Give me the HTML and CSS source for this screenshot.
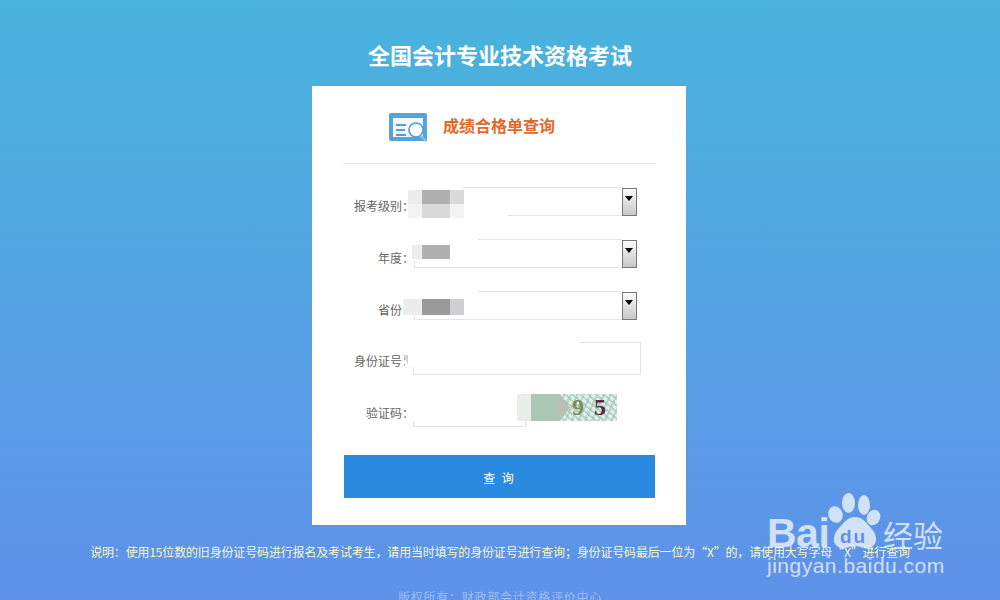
FILE: index.html
```html
<!DOCTYPE html>
<html lang="zh-CN">
<head>
  <meta charset="UTF-8" />
  <title>全国会计专业技术资格考试</title>
  <link rel="stylesheet" href="styles.css">
</head>
<body>
  <h1>全国会计专业技术资格考试</h1>

  <div class="card">
    <div class="card-head">
      <svg class="head-icon" width="40" height="30" viewBox="0 0 40 30">
        <rect width="38" height="28" rx="2" fill="#55a5da"/>
        <rect x="4" y="5" width="30" height="19" fill="#f4f9fc"/>
        <path d="M7 12h10M7 17h9M7 22h10" stroke="#4d9fd6" stroke-width="2.2" fill="none"/>
        <circle cx="27" cy="17" r="7" fill="#fff" stroke="#4d9fd6" stroke-width="1.6"/>
        <path d="M31.5 22.5l6 6" stroke="#8fc0e2" stroke-width="2"/>
      </svg>
      <span class="head-title">成绩合格单查询</span>
    </div>

    <div class="form">
      <div class="row row-select">
        <label>报考级别：</label>
        <div class="select">
          <div class="select-box"></div>
          <div class="select-arrow"></div>
          <div class="smear smear-1"></div>
          <div class="mosaic mosaic-1">
            <i class="c1"></i><i class="c4"></i><i class="c4"></i><i class="c2"></i>
            <i class="c0"></i><i class="c2"></i><i class="c2"></i><i class="c0"></i>
          </div>
        </div>
      </div>
      <div class="row row-select">
        <label>年度：</label>
        <div class="select">
          <div class="select-box"></div>
          <div class="select-arrow"></div>
          <div class="smear smear-2"></div>
          <div class="mosaic mosaic-2"><i class="c1"></i><i class="c4"></i><i class="c4"></i></div>
        </div>
      </div>
      <div class="row row-select row-last">
        <label>省份：</label>
        <div class="select">
          <div class="select-box"></div>
          <div class="select-arrow"></div>
          <div class="smear smear-2"></div>
          <div class="mosaic mosaic-3"><i class="c1 wide"></i><i class="c5"></i><i class="c5"></i><i class="c3"></i></div>
        </div>
      </div>
      <div class="row row-id">
        <label>身份证号：</label>
        <div class="field">
          <input class="text-input input-id" type="text">
          <div class="smear smear-id"></div>
          <div class="notch"></div>
        </div>
      </div>
      <div class="row row-code">
        <label>验证码：</label>
        <div class="field">
          <input class="text-input input-code" type="text">
          <div class="smear smear-code"></div>
        </div>
        <div class="captcha">
          <span class="captcha-mask"></span>
          <span class="captcha-nums"><b class="num-a">9</b><b class="num-b">5</b></span>
        </div>
      </div>
      <button class="submit">查 询</button>
    </div>
  </div>

  <p class="note">说明：使用15位数的旧身份证号码进行报名及考试考生，请用当时填写的身份证号进行查询；身份证号码最后一位为“X”的，请使用大写字母“X”进行查询</p>
  <p class="copy">版权所有：财政部会计资格评价中心</p>

  <div class="watermark">
    <span class="wm-bai">Bai</span>
    <svg class="wm-paw" width="60" height="62" viewBox="0 0 60 62">
      <g fill="#fff" fill-opacity="0.72">
        <ellipse cx="9.5" cy="24.5" rx="7" ry="8.5" transform="rotate(-20 9.5 24.5)"/>
        <ellipse cx="22.5" cy="13" rx="6.5" ry="10"/>
        <ellipse cx="38" cy="15" rx="6" ry="10"/>
        <ellipse cx="47.5" cy="27.5" rx="6.5" ry="8" transform="rotate(25 47.5 27.5)"/>
        <path d="M29 27c8 0 11 6 16 11 7 7 8 20-5 20-4 0-7-2-11-2s-7 2-11 2c-13 0-12-13-5-20 5-5 8-11 16-11z"/>
      </g>
    </svg>
    <span class="wm-du">du</span>
    <span class="wm-cn">经验</span>
    <span class="wm-url">jingyan.baidu.com</span>
  </div>
</body>
</html>
```

FILE: styles.css
```css
html, body {
  margin: 0;
  height: 600px;
  overflow: hidden;
}
body {
  font-family: "Noto Sans CJK SC", "Liberation Sans", sans-serif;
  background: linear-gradient(#49b4dd, #5f91e9);
  position: relative;
}
h1 {
  margin: 0;
  padding-top: 38px;
  height: 32px;
  line-height: 32px;
  font-size: 22px;
  font-weight: 700;
  color: #fff;
  text-align: center;
}
.card {
  box-sizing: border-box;
  width: 374px;
  height: 439px;
  margin: 16px 0 0 312px;
  padding: 0 30px 0 31px;
  background: #fff;
}
.card-head {
  box-sizing: border-box;
  height: 78px;
  padding: 27px 0 0 46px;
  display: flex;
  border-bottom: 1px solid #e6e6e6;
}
.head-icon {
  flex: none;
}
.head-title {
  margin-left: 14px;
  font-size: 16px;
  line-height: 24px;
  font-weight: 700;
  color: #e2682c;
}
.form {
  padding: 23px 0 0 1px;
}
.row {
  display: flex;
  margin-bottom: 23px;
}
.row label {
  width: 70px;
  flex: none;
  text-align: right;
  font-family: "Noto Sans CJK TC", sans-serif;
  font-size: 12px;
  color: #666;
}
.row-select {
  height: 29px;
}
.row-select label {
  line-height: 38px;
}
.row-last {
  margin-bottom: 22px;
}
.row-id {
  height: 33px;
  margin-bottom: 18px;
}
.row-id label {
  line-height: 38px;
}
.row-code {
  height: 34px;
  margin-bottom: 28px;
}
.row-code label {
  line-height: 40px;
}
.select {
  position: relative;
  display: flex;
  width: 223px;
  height: 29px;
}
.select-box {
  flex: 1;
  border: 1px solid #e4e4e4;
  border-right: 0;
}
.select-arrow {
  position: relative;
  box-sizing: border-box;
  width: 15px;
  height: 28px;
  margin-top: 1px;
  border: 1px solid #777;
  background: linear-gradient(#fafafa, #c8c8c8);
}
.select-arrow::after {
  content: "";
  position: absolute;
  left: 2px;
  top: 7px;
  border: 4px solid transparent;
  border-top: 5px solid #000;
  border-bottom: 0;
}
.field {
  position: relative;
}
.text-input {
  display: block;
  box-sizing: border-box;
  padding: 0;
  border: 1px solid #e4e4e4;
  background: #fff;
  outline: none;
}
.input-id {
  width: 228px;
  height: 33px;
  margin-left: -1px;
}
.input-code {
  width: 113px;
  height: 34px;
  margin-left: -1px;
}
/* white smudges left by the person who censored the screenshot */
.smear {
  position: absolute;
  background: #fff;
}
.smear-1 {
  left: -6px;
  top: -1px;
  width: 100px;
  height: 31px;
  clip-path: polygon(0 0, 55px 0, 55px 20px, 100px 20px, 100px 100%, 0 100%);
}
.smear-2 {
  left: -6px;
  top: -1px;
  width: 70px;
  height: 22px;
}
.smear-id {
  left: -9px;
  top: -1px;
  width: 174px;
  height: 26px;
}
.smear-code {
  left: -5px;
  top: -1px;
  width: 116px;
  height: 30px;
}
.notch {
  position: absolute;
  left: -11px;
  top: 13px;
  width: 5px;
  height: 10px;
  background: #d4d4d4;
  clip-path: polygon(100% 0, 100% 100%, 0 0);
}
.mosaic {
  position: absolute;
  display: flex;
  flex-wrap: wrap;
}
.mosaic i {
  display: block;
  width: 14px;
  height: 14px;
}
.mosaic i.wide {
  width: 19px;
}
.mosaic-1 {
  left: -6px;
  top: 3px;
  width: 56px;
}
.mosaic-2 {
  left: -2px;
  top: 6px;
  width: 38px;
}
.mosaic-2 i:first-child {
  width: 10px;
}
.mosaic-3 {
  left: -11px;
  top: 8px;
  width: 61px;
}
.mosaic-3 i {
  height: 16px;
}
.c0 { background: #f3f3f3; }
.c1 { background: #ececec; }
.c2 { background: #dadada; }
.c3 { background: #cfcfd3; }
.c4 { background: #b0b0b0; }
.c5 { background: #9a9a9a; }
.captcha {
  position: relative;
  flex: none;
  width: 100px;
  height: 27px;
  margin: 1px 0 0 -9px;
  background:
    repeating-linear-gradient(115deg, rgba(150, 195, 175, 0.55) 0 2px, transparent 2px 6px),
    repeating-linear-gradient(40deg, #b7d6c9 0 2px, #e2eee9 2px 5px);
}
.captcha-mask {
  position: absolute;
  left: 0;
  top: 0;
  width: 53px;
  height: 27px;
  background: linear-gradient(90deg, #e8eeea 0 14px, #abc6b7 14px 41px, #b9bfb2 41px);
  clip-path: polygon(0 0, 43px 0, 53px 50%, 43px 100%, 0 100%);
}
.captcha-nums {
  position: absolute;
  left: 55px;
  top: 0;
  font-family: "Liberation Serif", serif;
  font-size: 24px;
  line-height: 26px;
}
.num-a { color: #848b55; }
.num-b { margin-left: 10px; color: #5d2c3c; }
.submit {
  display: block;
  width: 311px;
  height: 43px;
  padding: 2px 0 0;
  border: none;
  background: #2a8ae0;
  color: #fff;
  font-family: inherit;
  font-size: 12px;
  letter-spacing: 2px;
}
.note {
  margin: 18px 0 0;
  line-height: 18px;
  font-family: "Noto Sans CJK TC", sans-serif;
  font-size: 12px;
  letter-spacing: -0.16px;
  color: #f6f6c6;
  text-align: center;
  white-space: nowrap;
}
.copy {
  margin: 27px 0 0;
  line-height: 18px;
  font-size: 12px;
  letter-spacing: 0.75px;
  color: #9dbdf0;
  text-align: center;
}
.watermark {
  position: absolute;
  left: 0;
  top: 0;
  width: 1000px;
  height: 600px;
  color: rgba(255, 255, 255, 0.72);
  pointer-events: none;
}
.watermark span {
  position: absolute;
  white-space: nowrap;
}
.wm-paw {
  position: absolute;
  left: 826px;
  top: 490px;
}
.wm-bai {
  left: 767px;
  top: 508px;
  font-family: "Liberation Sans", sans-serif;
  font-size: 41px;
  line-height: 50px;
  font-weight: 700;
  letter-spacing: -0.5px;
}
.watermark .wm-du {
  left: 840px;
  top: 524px;
  font-family: "Liberation Sans", sans-serif;
  font-size: 19px;
  line-height: 26px;
  font-weight: 700;
  letter-spacing: 2px;
  color: #5f92e8;
}
.wm-cn {
  left: 883px;
  top: 513px;
  font-size: 30px;
  line-height: 42px;
}
.wm-url {
  left: 767px;
  top: 552px;
  font-family: "Liberation Sans", sans-serif;
  font-size: 21px;
  line-height: 28px;
  letter-spacing: 0.5px;
}
```
